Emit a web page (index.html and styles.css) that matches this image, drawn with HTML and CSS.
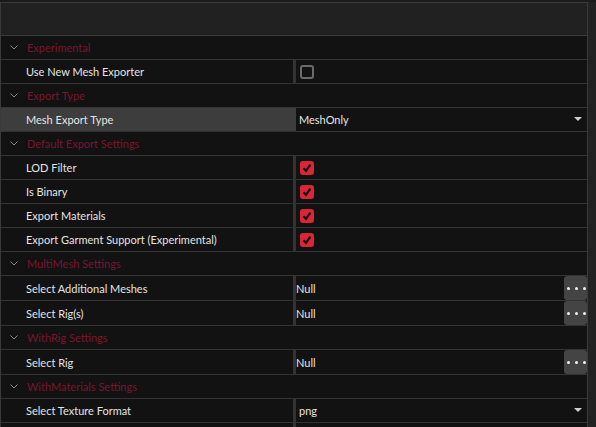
FILE: index.html
```html
<!DOCTYPE html>
<html>
<head>
<meta charset="utf-8">
<link rel="stylesheet" href="styles.css">
</head>
<body>
<div class="frame">
  <div class="grid">
    <div class="header"></div>

    <div class="cat"><span class="chev"><svg width="8" height="5" viewBox="0 0 8 5"><path d="M0.5 0.5 L4 4 L7.5 0.5" fill="none" stroke="#8a8a8a" stroke-width="1"/></svg></span><span class="cat-text">Experimental</span></div>
    <div class="row"><div class="label">Use New Mesh Exporter</div><div class="split"></div><div class="value"><span class="cb"></span></div></div>

    <div class="cat"><span class="chev"><svg width="8" height="5" viewBox="0 0 8 5"><path d="M0.5 0.5 L4 4 L7.5 0.5" fill="none" stroke="#8a8a8a" stroke-width="1"/></svg></span><span class="cat-text">Export Type</span></div>
    <div class="row sel"><div class="label">Mesh Export Type</div><div class="split"></div><div class="value combo"><span>MeshOnly</span><span class="arrow"></span></div></div>

    <div class="cat"><span class="chev"><svg width="8" height="5" viewBox="0 0 8 5"><path d="M0.5 0.5 L4 4 L7.5 0.5" fill="none" stroke="#8a8a8a" stroke-width="1"/></svg></span><span class="cat-text">Default Export Settings</span></div>
    <div class="row"><div class="label">LOD Filter</div><div class="split"></div><div class="value"><span class="cb on"><svg width="14" height="14" viewBox="0 0 14 14"><path d="M3.6 7.2 L6 9.8 L10.4 3.6" fill="none" stroke="#111" stroke-width="2.2"/></svg></span></div></div>
    <div class="row"><div class="label">Is Binary</div><div class="split"></div><div class="value"><span class="cb on"><svg width="14" height="14" viewBox="0 0 14 14"><path d="M3.6 7.2 L6 9.8 L10.4 3.6" fill="none" stroke="#111" stroke-width="2.2"/></svg></span></div></div>
    <div class="row"><div class="label">Export Materials</div><div class="split"></div><div class="value"><span class="cb on"><svg width="14" height="14" viewBox="0 0 14 14"><path d="M3.6 7.2 L6 9.8 L10.4 3.6" fill="none" stroke="#111" stroke-width="2.2"/></svg></span></div></div>
    <div class="row"><div class="label">Export Garment Support (Experimental)</div><div class="split"></div><div class="value"><span class="cb on"><svg width="14" height="14" viewBox="0 0 14 14"><path d="M3.6 7.2 L6 9.8 L10.4 3.6" fill="none" stroke="#111" stroke-width="2.2"/></svg></span></div></div>

    <div class="cat"><span class="chev"><svg width="8" height="5" viewBox="0 0 8 5"><path d="M0.5 0.5 L4 4 L7.5 0.5" fill="none" stroke="#8a8a8a" stroke-width="1"/></svg></span><span class="cat-text">MultiMesh Settings</span></div>
    <div class="row tall"><div class="label">Select Additional Meshes</div><div class="split"></div><div class="value field"><span class="ftext">Null</span><span class="btn"><i></i><i></i><i></i></span></div></div>
    <div class="row tall"><div class="label">Select Rig(s)</div><div class="split"></div><div class="value field"><span class="ftext">Null</span><span class="btn"><i></i><i></i><i></i></span></div></div>

    <div class="cat"><span class="chev"><svg width="8" height="5" viewBox="0 0 8 5"><path d="M0.5 0.5 L4 4 L7.5 0.5" fill="none" stroke="#8a8a8a" stroke-width="1"/></svg></span><span class="cat-text">WithRig Settings</span></div>
    <div class="row tall"><div class="label">Select Rig</div><div class="split"></div><div class="value field"><span class="ftext">Null</span><span class="btn"><i></i><i></i><i></i></span></div></div>

    <div class="cat"><span class="chev"><svg width="8" height="5" viewBox="0 0 8 5"><path d="M0.5 0.5 L4 4 L7.5 0.5" fill="none" stroke="#8a8a8a" stroke-width="1"/></svg></span><span class="cat-text">WithMaterials Settings</span></div>
    <div class="row"><div class="label">Select Texture Format</div><div class="split"></div><div class="value combo"><span>png</span><span class="arrow"></span></div></div>
    <div class="row"><div class="label"></div><div class="split"></div><div class="value"></div></div>
  </div>
  <div class="scroll"></div>
</div>
</body>
</html>
```
FILE: styles.css
```css
html, body {
  margin: 0;
  padding: 0;
  background: #1b1b1b;
  overflow: hidden;
}
body {
  font-family: "Lato", "Noto Sans", sans-serif;
  font-size: 11px;
  color: #e4e4e4;
}
.frame {
  display: flex;
  height: 427px;
  padding-top: 2px;
  box-sizing: border-box;
}
.grid {
  width: 588px;
  border-left: 1px solid #3a3a3a;
  border-right: 1px solid #3a3a3a;
  box-sizing: border-box;
  display: flex;
  flex-direction: column;
  background: #121212;
  overflow: hidden;
}
.scroll {
  width: 8px;
  background: #222222;
}
.header {
  height: 34px;
  flex: none;
  background: #212121;
  border-top: 1px solid #3a3a3a;
  border-bottom: 1px solid #3a3a3a;
  box-sizing: border-box;
}
.cat, .row {
  flex: none;
  height: 24px;
  border-bottom: 1px solid #333333;
  box-sizing: border-box;
  display: flex;
  align-items: center;
}
.row.tall {
  height: 25px;
}
.cat {
  background: #121212;
}
.chev {
  width: 26px;
  display: flex;
  justify-content: center;
  padding-left: 2px;
  box-sizing: border-box;
}
.chev svg {
  display: block;
  margin-left: -2px;
}
.cat-text {
  color: #7a1530;
}
.label {
  width: 292px;
  padding-left: 25px;
  box-sizing: border-box;
  align-self: stretch;
  display: flex;
  align-items: center;
  white-space: nowrap;
}
.row.sel .label, .row.sel .split {
  background: #3d3d3d;
}
.split {
  width: 3px;
  align-self: stretch;
  background: #333333;
}
.value {
  flex: 1;
  align-self: stretch;
  display: flex;
  align-items: center;
  padding-left: 4px;
  box-sizing: border-box;
}
.cb {
  width: 14px;
  height: 14px;
  box-sizing: border-box;
  border: 2px solid #6a6a6a;
  border-radius: 3px;
  display: block;
}
.cb.on {
  border: none;
  background: #dc2638;
}
.cb svg { display: block; }
.combo {
  justify-content: space-between;
  padding-left: 3px;
  padding-right: 5px;
}
.arrow {
  width: 0;
  height: 0;
  border-left: 4px solid transparent;
  border-right: 4px solid transparent;
  border-top: 4px solid #cfcfcf;
  margin-bottom: 2px;
}
.field {
  padding-left: 0;
}
.ftext {
  flex: 1;
}
.btn {
  width: 23px;
  align-self: stretch;
  background: #444444;
  border-radius: 3px;
  display: flex;
  align-items: center;
  justify-content: space-between;
  padding: 0 1px 0 3px;
  box-sizing: border-box;
}
.btn i {
  display: block;
  width: 3px;
  height: 3px;
  border-radius: 50%;
  background: #f2f2f2;
}
```
